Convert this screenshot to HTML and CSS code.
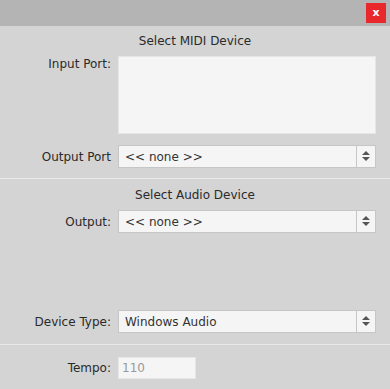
FILE: index.html
```html
<!DOCTYPE html>
<html lang="en">
<head>
  <meta charset="UTF-8">
  <title>Device Settings</title>
  <link rel="stylesheet" href="styles.css">
</head>
<body>
  <div class="window">
    <!-- Title bar -->
    <div class="titlebar">
      <button class="close-btn">x</button>
    </div>

    <!-- MIDI -->
    <div class="section">
      <h2>Select MIDI Device</h2>
      <div class="row row-top">
        <label>Input Port:</label>
        <div class="listbox"></div>
      </div>
      <div class="row">
        <label>Output Port</label>
        <div class="select"><span>&lt;&lt; none &gt;&gt;</span><i class="arrows"></i></div>
      </div>
    </div>

    <!-- Audio -->
    <div class="section audio">
      <h2>Select Audio Device</h2>
      <div class="row">
        <label>Output:</label>
        <div class="select"><span>&lt;&lt; none &gt;&gt;</span><i class="arrows"></i></div>
      </div>
      <div class="spacer"></div>
      <div class="row">
        <label>Device Type:</label>
        <div class="select"><span>Windows Audio</span><i class="arrows"></i></div>
      </div>
    </div>

    <!-- Tempo -->
    <div class="section last">
      <div class="row">
        <label>Tempo:</label>
        <div class="textbox">110</div>
      </div>
    </div>
  </div>
</body>
</html>
```

FILE: styles.css
```css
* {
  box-sizing: border-box;
  margin: 0;
  padding: 0;
}

body {
  font-family: 'DejaVu Sans', sans-serif;
  font-size: 12px;
  background: #d4d4d4;
  color: #2a2a2a;
  width: 390px;
  height: 389px;
  overflow: hidden;
}

.titlebar {
  height: 26px;
  background: #b4b4b4;
  display: flex;
  justify-content: flex-end;
  align-items: flex-start;
  padding: 3px 4px 0 0;
}

.close-btn {
  width: 20px;
  height: 20px;
  border: none;
  background: #e8282b;
  color: #fff;
  font-family: 'DejaVu Sans', sans-serif;
  font-size: 11px;
  font-weight: bold;
  line-height: 18px;
}

.section {
  border-bottom: 1px solid #e9e9e9;
  padding: 8px 0 10px;
}

.section h2 {
  font-size: 12px;
  font-weight: normal;
  text-align: center;
  line-height: 14px;
  margin-bottom: 8px;
}

.audio {
  padding-top: 9px;
  padding-bottom: 11px;
}

.row {
  display: flex;
  align-items: center;
  gap: 7px;
  margin-bottom: 11px;
}

.row:last-child {
  margin-bottom: 0;
}

.row-top {
  align-items: flex-start;
}

.row label {
  width: 111px;
  text-align: right;
}

.row-top label {
  padding-top: 1px;
}

.listbox {
  width: 258px;
  height: 78px;
  background: #f5f5f5;
  border: 1px solid #e6e6e6;
}

.select {
  width: 258px;
  height: 23px;
  background: #f5f5f5;
  border: 1px solid #c6c6c6;
  display: flex;
  align-items: center;
  padding-left: 6px;
  color: #333;
}

.select span {
  flex: 1;
}

.arrows {
  width: 19px;
  height: 100%;
  border-left: 1px solid #c6c6c6;
  position: relative;
}

.arrows::before,
.arrows::after {
  content: "";
  position: absolute;
  left: 5px;
  border-left: 4px solid transparent;
  border-right: 4px solid transparent;
}

.arrows::before {
  top: 5px;
  border-bottom: 4px solid #555;
}

.arrows::after {
  top: 11px;
  border-top: 4px solid #555;
}

.spacer {
  height: 66px;
}

.last {
  border-bottom: none;
  padding-top: 12px;
}

.textbox {
  width: 78px;
  height: 22px;
  background: #f5f5f5;
  border: 1px solid #e6e6e6;
  color: #999;
  padding: 3px 3px;
  line-height: 14px;
}
```
